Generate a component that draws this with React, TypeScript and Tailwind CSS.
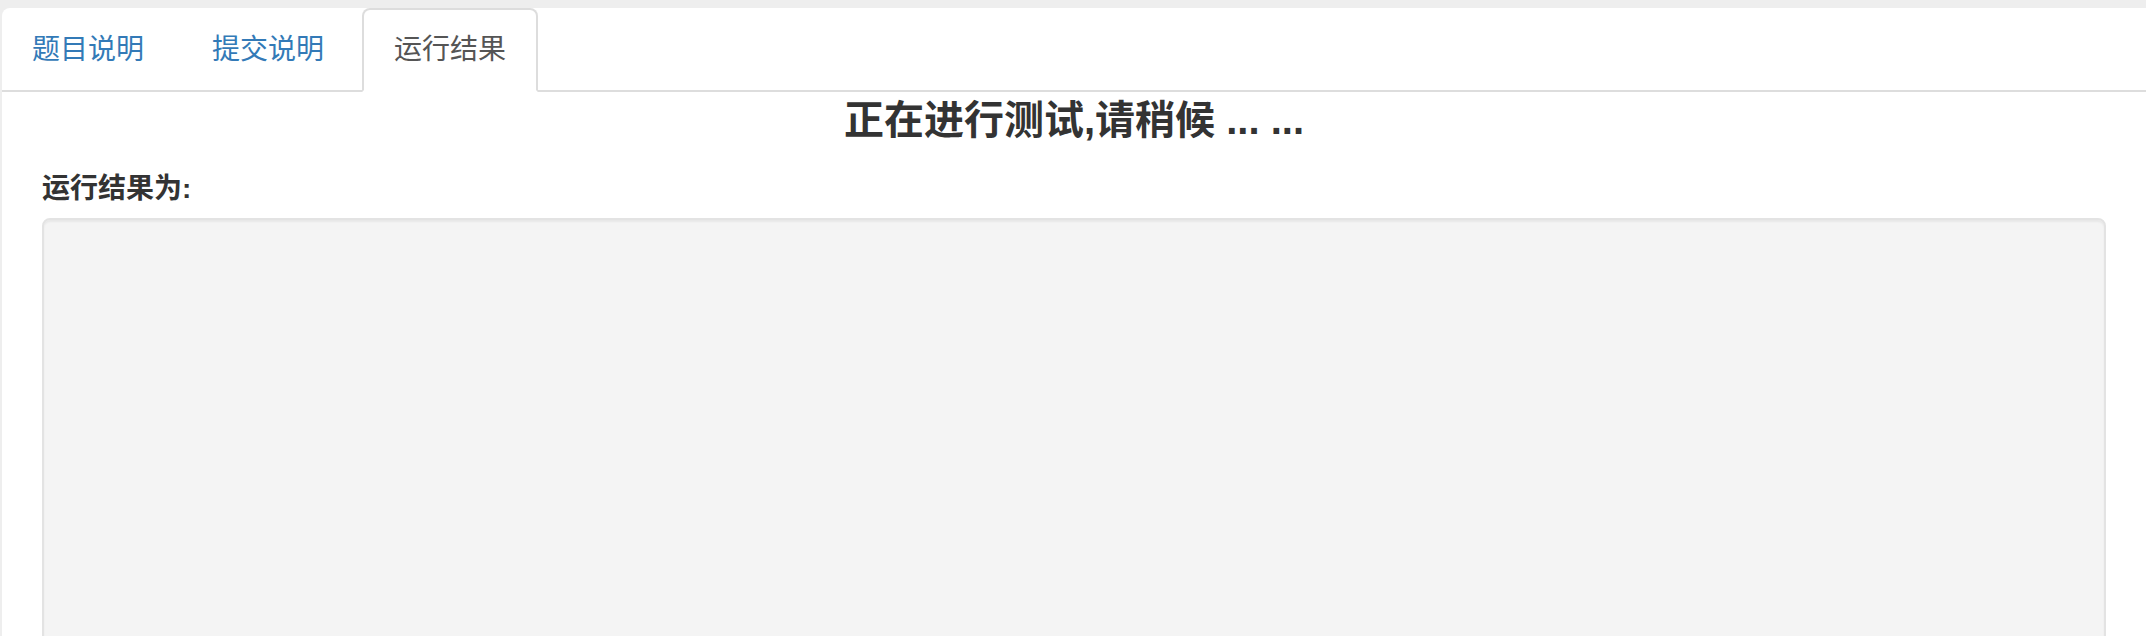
const font = 'font-["Helvetica_Neue","Liberation_Sans","Noto_Sans_CJK_SC",sans-serif]';

const tabs = [
  { label: '题目说明', active: false },
  { label: '提交说明', active: false },
  { label: '运行结果', active: true },
];

const App: React.FC = () => {
  return (
    <div className={`h-[636px] overflow-hidden bg-[#eeeeee] pt-2 pl-[2px] ${font}`}>
      <div className="h-full bg-white rounded-tl-[8px]">
        <ul className="flex border-b-2 border-[#dddddd]">
          {tabs.map((t) => (
            <li key={t.label} className="mr-[4px] -mb-[2px]">
              <a
                className={
                  t.active
                    ? 'block px-[30px] py-[20px] text-[28px] leading-[40px] border-2 border-[#dddddd] border-b-transparent rounded-t-[8px] bg-white text-[#555555]'
                    : 'block pl-[28px] pr-[32px] py-[20px] text-[28px] leading-[40px] border-2 border-transparent rounded-t-[8px] text-[#337ab7]'
                }
              >
                {t.label}
              </a>
            </li>
          ))}
        </ul>
        <div className="px-10">
          <h4 className="mt-[7px] text-center text-[40px] leading-[42px] font-bold text-[#333333]">
            正在进行测试,请稍候 ... ...
          </h4>
          <label className="block mt-[28px] mb-[9px] text-[28px] leading-[40px] font-bold text-[#333333]">
            运行结果为:
          </label>
          <div className="h-[600px] bg-[#f4f4f4] border-2 border-[#e3e3e3] rounded-[8px] shadow-[inset_0_2px_2px_rgba(0,0,0,0.05)]" />
        </div>
      </div>
    </div>
  );
};

export default App;
